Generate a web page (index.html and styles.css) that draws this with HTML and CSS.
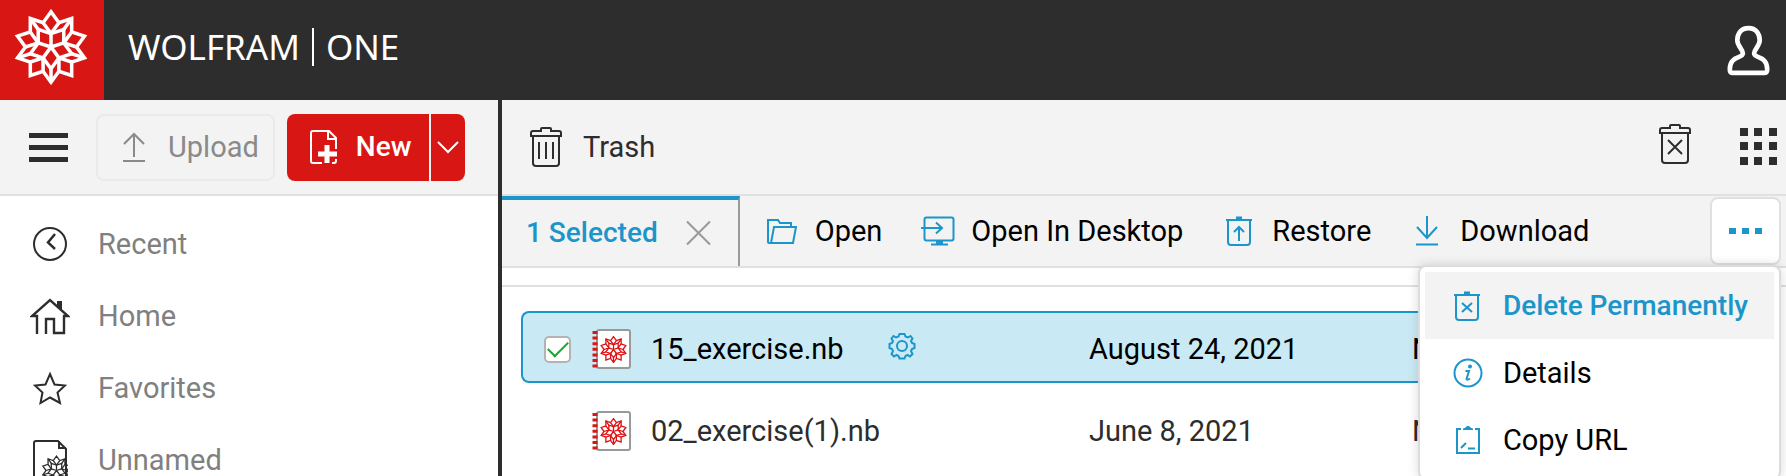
FILE: index.html
```html
<!DOCTYPE html>
<html lang="en">
<head>
<meta charset="utf-8">
<meta name="viewport" content="width=device-width, initial-scale=1">
<title>Wolfram|One – Trash</title>
<link rel="stylesheet" href="styles.css">
</head>
<body>
<svg class="sprite" aria-hidden="true">
  <symbol id="spikey" viewBox="-108 -108 216 216">
    <path d="M0-100L22.5-69.1L58.8-80.9V-42.7L95.1-30.9L72.7 0L95.1 30.9L58.8 42.7V80.9L22.5 69.1L0 100L-22.5 69.1L-58.8 80.9V42.7L-95.1 30.9L-72.7 0L-95.1-30.9L-58.8-42.7V-80.9L-22.5-69.1Z"/>
    <path d="M0-38.2L36.3-50L36.3-11.8L58.8 19.1L22.5 30.9L0 61.8L-22.5 30.9L-58.8 19.1L-36.3-11.8V-50Z"/>
    <path d="M0 0V-38.2M0 0L36.3-11.8M0 0L22.5 30.9M0 0L-22.5 30.9M0 0L-36.3-11.8"/>
    <path d="M-22.5-69.1L0-38.2L22.5-69.1M58.8-42.7L36.3-11.8L72.7 0M58.8 42.7L22.5 30.9V69.1M-22.5 69.1V30.9L-58.8 42.7M-72.7 0L-36.3-11.8L-58.8-42.7"/>
    <path d="M36.3-50L58.8-80.9M58.8 19.1L95.1 30.9M0 61.8V100M-58.8 19.1L-95.1 30.9M-36.3-50L-58.8-80.9"/>
  </symbol>
  <symbol id="notebook" viewBox="0 0 40 42">
    <rect x="5" y="2" width="33" height="38" rx="2" fill="#fff" stroke="#999" stroke-width="2"/>
    <path d="M3 3V40" stroke="#d81715" stroke-width="5" stroke-dasharray="3 2.6" fill="none"/>
    <svg x="7.500" y="7.500" width="28" height="28" stroke="#e01010" stroke-width="10" fill="none"><use href="#spikey"/></svg>
  </symbol>
  <symbol id="can" viewBox="0 0 32 40">
    <path d="M3 9V36Q3 39 6 39H26Q29 39 29 36V9M1 9V6Q1 4 3 4H11V2Q11 1 12 1H20Q21 1 21 2V4H29Q31 4 31 6V9Z"/>
  </symbol>
  <symbol id="bin" viewBox="0 0 28 30">
    <path d="M3 4V26Q3 29 6 29H22Q25 29 25 26V4M1 4H27"/><path d="M11 2H17" stroke-width="3"/>
  </symbol>
</svg>

<header class="topbar">
  <a class="logo" href="#" aria-label="Wolfram home"><svg class="logo-mark"><use href="#spikey"/></svg></a>
  <div class="wordmark"><span>WOLFRAM</span><span class="wordmark-rule"></span><span>ONE</span></div>
  <button class="account" aria-label="Account">
    <svg width="43" height="51" viewBox="0 0 46 54" fill="none" stroke="#fff" stroke-width="5"><path d="M23 3C15 3 11 9 11 16C11 22 17 26 17 30C17 36 3 32 3 47C3 50 4 51 6 51H40C42 51 43 50 43 47C43 32 29 36 29 30C29 26 35 22 35 16C35 9 31 3 23 3Z"/></svg>
  </button>
</header>

<div class="workspace">
  <aside class="sidebar">
    <div class="bar side-bar">
      <button class="burger" aria-label="Menu"><span></span><span></span><span></span></button>
      <button class="upload">
        <svg width="24" height="30" viewBox="0 0 24 30" class="line"><path d="M12 25V2M2 12L12 2L22 12M1 29H23"/></svg>Upload
      </button>
      <div class="new-group">
        <button class="new">
          <svg width="28" height="36" viewBox="0 0 28 36" class="line"><path d="M12 34H3Q1 34 1 32V4Q1 2 3 2H19L26 9V20M18 2V10H26M22 34H24Q26 34 26 32V30"/><path d="M17 16V34M8 25H27" stroke-width="5"/></svg>New
        </button>
        <button class="new-more" aria-label="More new options">
          <svg width="22" height="13" viewBox="0 0 22 13" class="line"><path d="M1 1L11 11L21 1"/></svg>
        </button>
      </div>
    </div>
    <nav class="nav">
      <a href="#"><span class="nav-icon"><svg width="36" height="36" viewBox="0 0 36 36" class="line"><circle cx="18" cy="18" r="16"/><path d="M23 8L16 16.500L23 23" stroke-width="2.500"/></svg></span>Recent</a>
      <a href="#"><span class="nav-icon"><svg width="40" height="38" viewBox="0 0 40 38" class="line"><path d="M7 37V19H2L20 3L38 19H34V36H24V22H16V37" stroke-width="2.400"/><path d="M27 4H32V14L27 9Z" fill="currentColor" stroke="none"/></svg></span>Home</a>
      <a href="#"><span class="nav-icon"><svg width="34" height="34" viewBox="0 0 34 34" class="line"><path d="M17 3L21.500 13.500L32 14.500L24.500 21.500L27 32L17 26.500L7.500 32L9.500 21.500L2 14.500L12.500 13.500Z"/></svg></span>Favorites</a>
      <a href="#"><span class="nav-icon"><svg width="36" height="42" viewBox="0 0 36 42" class="line"><path d="M34 10V39Q34 41 32 41H4Q2 41 2 39V4Q2 2 4 2H26L34 10ZM27 2V9H34"/><svg x="9" y="16" width="31" height="31" stroke-width="9"><use href="#spikey"/></svg></svg></span>Unnamed</a>
    </nav>
  </aside>

  <main class="main">
    <div class="bar title-bar">
      <svg class="line" width="32" height="40"><use href="#can"/><path d="M9 15V32M16 15V32M23 15V32"/></svg>
      <h1>Trash</h1>
      <button class="icon-button empty-trash" aria-label="Empty trash"><svg class="line" width="32" height="40"><use href="#can"/><path d="M9 16L23 30M23 16L9 30"/></svg></button>
      <button class="icon-button grid-view" aria-label="Grid view"><svg width="37" height="37" viewBox="0 0 37 37" fill="currentColor"><path d="M0 0h8v8H0zM14 0h8v8h-8zM29 0h8v8h-8zM0 14h8v8H0zM14 14h8v8h-8zM29 14h8v8h-8zM0 29h8v8H0zM14 29h8v8h-8zM29 29h8v8h-8z"/></svg></button>
    </div>

    <div class="toolbar">
      <div class="selection">1 Selected
        <button class="icon-button clear" aria-label="Clear selection"><svg class="line" width="25" height="26" viewBox="0 0 25 26"><path d="M1 1.500L24 24.500M24 1.500L1 24.500"/></svg></button>
      </div>
      <div class="actions">
        <button><span class="action-icon"><svg class="line" width="30" height="26" viewBox="0 0 30 26"><path d="M4 25L7 9H29L26 25H2Q1 25 1 24V2H11L13 5H24V9"/></svg></span>Open</button>
        <button><span class="action-icon"><svg class="line" width="34" height="30" viewBox="0 0 34 30"><rect x="3.500" y="1.500" width="29" height="23" rx="2"/><path d="M0 12H20M15 6.500L21 12L15 17.500"/><path d="M10 28.500H27"/><path d="M15 26.500H22" stroke-width="4"/></svg></span>Open In Desktop</button>
        <button><span class="action-icon"><svg class="line" width="28" height="30"><use href="#bin"/><path d="M14 25V12M9 16L14 11L19 16"/></svg></span>Restore</button>
        <button><span class="action-icon"><svg class="line" width="24" height="30" viewBox="0 0 24 30"><path d="M12 0V22M2 11L12 22L22 11M1 28.500H23"/></svg></span>Download</button>
      </div>
      <div class="overflow">
        <button class="more" aria-label="More actions" aria-expanded="true"><svg width="34" height="8" viewBox="0 0 34 8" fill="currentColor"><path d="M0 1h7v6H0zM13 1h7v6h-7zM26 1h7v6h-7z"/></svg></button>
        <div class="menu" role="menu">
          <button class="active" role="menuitem"><svg class="line" width="28" height="30"><use href="#bin" width="28" height="30"/><path d="M9 12L19 21M19 12L9 21"/></svg>Delete Permanently</button>
          <button role="menuitem"><svg class="line" width="30" height="30" viewBox="0 0 30 30"><circle cx="15" cy="15" r="13.500"/><path d="M12.500 13H16L13.500 21Q14 22.500 17 20.500"/><circle cx="17" cy="8.500" r="1" fill="currentColor"/></svg>Details</button>
          <button role="menuitem"><svg class="line" width="30" height="30" viewBox="0 0 30 30"><path d="M8 4H4V28H26V4H22M8 23L13 18M15 23.500H22"/><path d="M10 5V4Q10 3 12 3Q13 1 15 1Q17 1 18 3Q20 3 20 4V5Z" fill="currentColor" stroke="none"/></svg>Copy URL</button>
        </div>
      </div>
    </div>

    <div class="list-gap"></div>
    <table class="files">
      <colgroup><col class="col-check"><col class="col-name"><col class="col-date"><col></colgroup>
      <tbody>
        <tr class="selected">
          <td><input type="checkbox" checked aria-label="Select 15_exercise.nb"></td>
          <td><div class="file"><svg width="40" height="42"><use href="#notebook"/></svg><span>15_exercise.nb</span>
            <button class="icon-button gear" aria-label="File settings"><svg class="line" width="28" height="28" viewBox="-14 -14 28 28"><circle r="5"/><path d="M-2.500-12H2.500L3.500-9.500L6-8.500L8.500-10L10.500-7.500L9-5L10-3L12.500-2V2L10 3L9 5L10.500 8L8 10.500L5.500 9L3.500 10L2.500 12.500H-2.500L-3.500 10L-5.500 9L-8 10.500L-10.500 8L-9 5L-10 3L-12.500 2V-2L-10-3L-9-5L-10.500-7.500L-8.500-10L-6-8.500L-3.500-9.500Z"/></svg></button></div></td>
          <td>August 24, 2021</td>
          <td>N</td>
        </tr>
        <tr>
          <td></td>
          <td><div class="file"><svg width="40" height="42"><use href="#notebook"/></svg><span>02_exercise(1).nb</span></div></td>
          <td>June 8, 2021</td>
          <td>N</td>
        </tr>
      </tbody>
    </table>
  </main>
</div>
</body>
</html>
```

FILE: styles.css
```css
:root {
  --dark: #2d2d2d;
  --red: #d81715;
  --blue: #1b95ca;
  --panel: #f3f3f3;
  --rule: #e0e0e0;
}

* { box-sizing: border-box; }

body {
  margin: 0;
  height: 100vh;
  overflow: hidden;
  display: flex;
  flex-direction: column;
  background: #fff;
  color: var(--dark);
  font: 29px/32px Roboto, "Liberation Sans", sans-serif;
}

button {
  display: flex;
  align-items: center;
  padding: 0;
  border: 0;
  background: none;
  color: inherit;
  font: inherit;
  cursor: pointer;
}

svg { display: block; flex: none; }
.sprite { position: absolute; width: 0; height: 0; }
.line { fill: none; stroke: currentColor; stroke-width: 2; }

.topbar {
  flex: none;
  display: flex;
  align-items: center;
  height: 100px;
  padding-right: 16px;
  background: var(--dark);
  color: #fff;
}
.logo {
  display: flex;
  justify-content: center;
  width: 104px;
  height: 100px;
  padding: 9px 2px 0 0;
  background: var(--red);
}
.logo-mark {
  width: 76px;
  height: 76px;
  fill: none;
  stroke: #fff;
  stroke-width: 10;
}
.wordmark {
  display: flex;
  align-items: center;
  gap: 12px;
  margin: 0 auto 6px 24px;
  font: 35px/40px "Noto Sans", sans-serif;
}
.wordmark-rule { width: 2px; height: 38px; background: #fff; }

.workspace { flex: 1; display: flex; min-height: 0; }
.sidebar { flex: none; width: 502px; border-right: 4px solid var(--dark); }
.main { flex: 1; min-width: 0; }

.bar {
  display: flex;
  align-items: center;
  height: 96px;
  border-bottom: 2px solid var(--rule);
  background: var(--panel);
}

.side-bar { padding-left: 29px; }
.burger { flex-direction: column; gap: 7px; width: 39px; margin-right: 28px; }
.burger span { width: 100%; height: 5px; background: var(--dark); }
.upload {
  gap: 22px;
  height: 67px;
  margin-right: 12px;
  padding: 0 14px 0 24px;
  border: 2px solid #eaeaea;
  border-radius: 8px;
  color: #8a8a8a;
}
.new-group { display: flex; gap: 2px; color: #fff; font-size: 28px; font-weight: 500; }
.new, .new-more { height: 67px; background: var(--red); }
.new { gap: 18px; padding: 0 18px 0 23px; border-radius: 8px 0 0 8px; }
.new-more { padding: 0 6px; border-radius: 0 8px 8px 0; }

.nav { padding-top: 12px; }
.nav a {
  display: flex;
  align-items: center;
  height: 72px;
  padding-left: 30px;
  color: #808080;
  text-decoration: none;
}
.nav-icon {
  display: flex;
  justify-content: center;
  width: 40px;
  margin-right: 28px;
  color: var(--dark);
}

.title-bar { padding: 0 9px 0 28px; }
.title-bar h1 { margin: 0 auto 0 21px; font: inherit; }
.empty-trash { margin: 0 49px 6px 0; }
.grid-view { margin-bottom: 2px; }

.toolbar {
  display: flex;
  align-items: center;
  height: 72px;
  padding-right: 5px;
  border-bottom: 2px solid var(--rule);
  background: var(--panel);
}
.selection {
  display: flex;
  align-items: center;
  gap: 28px;
  height: 100%;
  padding: 0 27px 0 24px;
  border-top: 4px solid var(--blue);
  border-right: 2px solid #999;
  color: var(--blue);
  font-size: 28px;
  font-weight: 500;
}
.clear { color: #999; }
.actions { display: flex; gap: 39px; margin: 0 auto 0 25px; color: #000; }
.actions button { gap: 16px; }
.action-icon { display: flex; justify-content: center; width: 34px; color: var(--blue); }

.overflow { position: relative; }
.more {
  justify-content: center;
  width: 71px;
  height: 68px;
  border: 2px solid var(--rule);
  border-radius: 8px;
  background: #fff;
  color: var(--blue);
}
.menu {
  position: absolute;
  top: 100%;
  right: 0;
  padding: 5px;
  border: 2px solid #dcdcdc;
  border-radius: 8px;
  background: #fff;
  box-shadow: 0 0 12px rgba(0, 0, 0, 0.15);
  color: #000;
}
.menu button {
  gap: 20px;
  width: 100%;
  height: 67px;
  padding: 0 26px 0 28px;
  white-space: nowrap;
}
.menu svg { width: 30px; color: var(--blue); }
.menu .active { background: var(--panel); color: var(--blue); font-size: 28px; font-weight: 500; }

.list-gap { height: 19px; border-bottom: 2px solid var(--rule); }

.files {
  width: calc(100% - 39px);
  margin: 14px 20px 0 19px;
  border-spacing: 0 10px;
  table-layout: fixed;
}
.col-check { width: 71px; }
.col-name { width: 497px; }
.col-date { width: 323px; }
.files td { height: 72px; padding: 4px 0 0; }
.selected { color: #000; }
.selected td {
  border: solid var(--blue);
  border-width: 2px 0;
  background: #c9eaf5;
}
.selected td:first-child { padding-left: 21px; border-left-width: 2px; border-radius: 8px 0 0 8px; }
.selected td:last-child { border-right-width: 2px; border-radius: 0 8px 8px 0; }
.file { display: flex; align-items: center; gap: 19px; }
.gear { margin: 0 0 6px 25px; color: var(--blue); }

input[type="checkbox"] {
  appearance: none;
  display: grid;
  place-items: center;
  width: 27px;
  height: 27px;
  margin: 0;
  border: 2px solid #b3b3b3;
  border-radius: 5px;
  background: #fff;
}
input[type="checkbox"]:checked::before {
  content: "";
  width: 18px;
  height: 9px;
  margin-bottom: 5px;
  border: solid #16a728;
  border-width: 0 0 2px 2px;
  transform: rotate(-45deg);
}
```
